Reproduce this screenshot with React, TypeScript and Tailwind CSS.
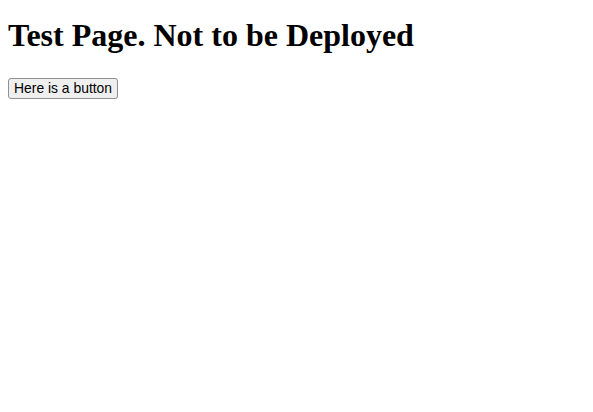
export default function App() {
  return (
    <div className="min-h-screen bg-white p-2 text-black">
      <h1 className="mt-[9px] mb-[21px] font-['Liberation_Serif',serif] text-[32px] font-bold leading-[37px]">
        Test Page. Not to be Deployed
      </h1>
      <button
        type="button"
        className="h-[21px] rounded-[3px] border border-[#8e8e93] bg-[#efeff0] px-[5px] font-['Liberation_Sans',Arial,sans-serif] text-[13.9px] leading-[15px] text-black"
      >
        Here is a button
      </button>
    </div>
  );
}
